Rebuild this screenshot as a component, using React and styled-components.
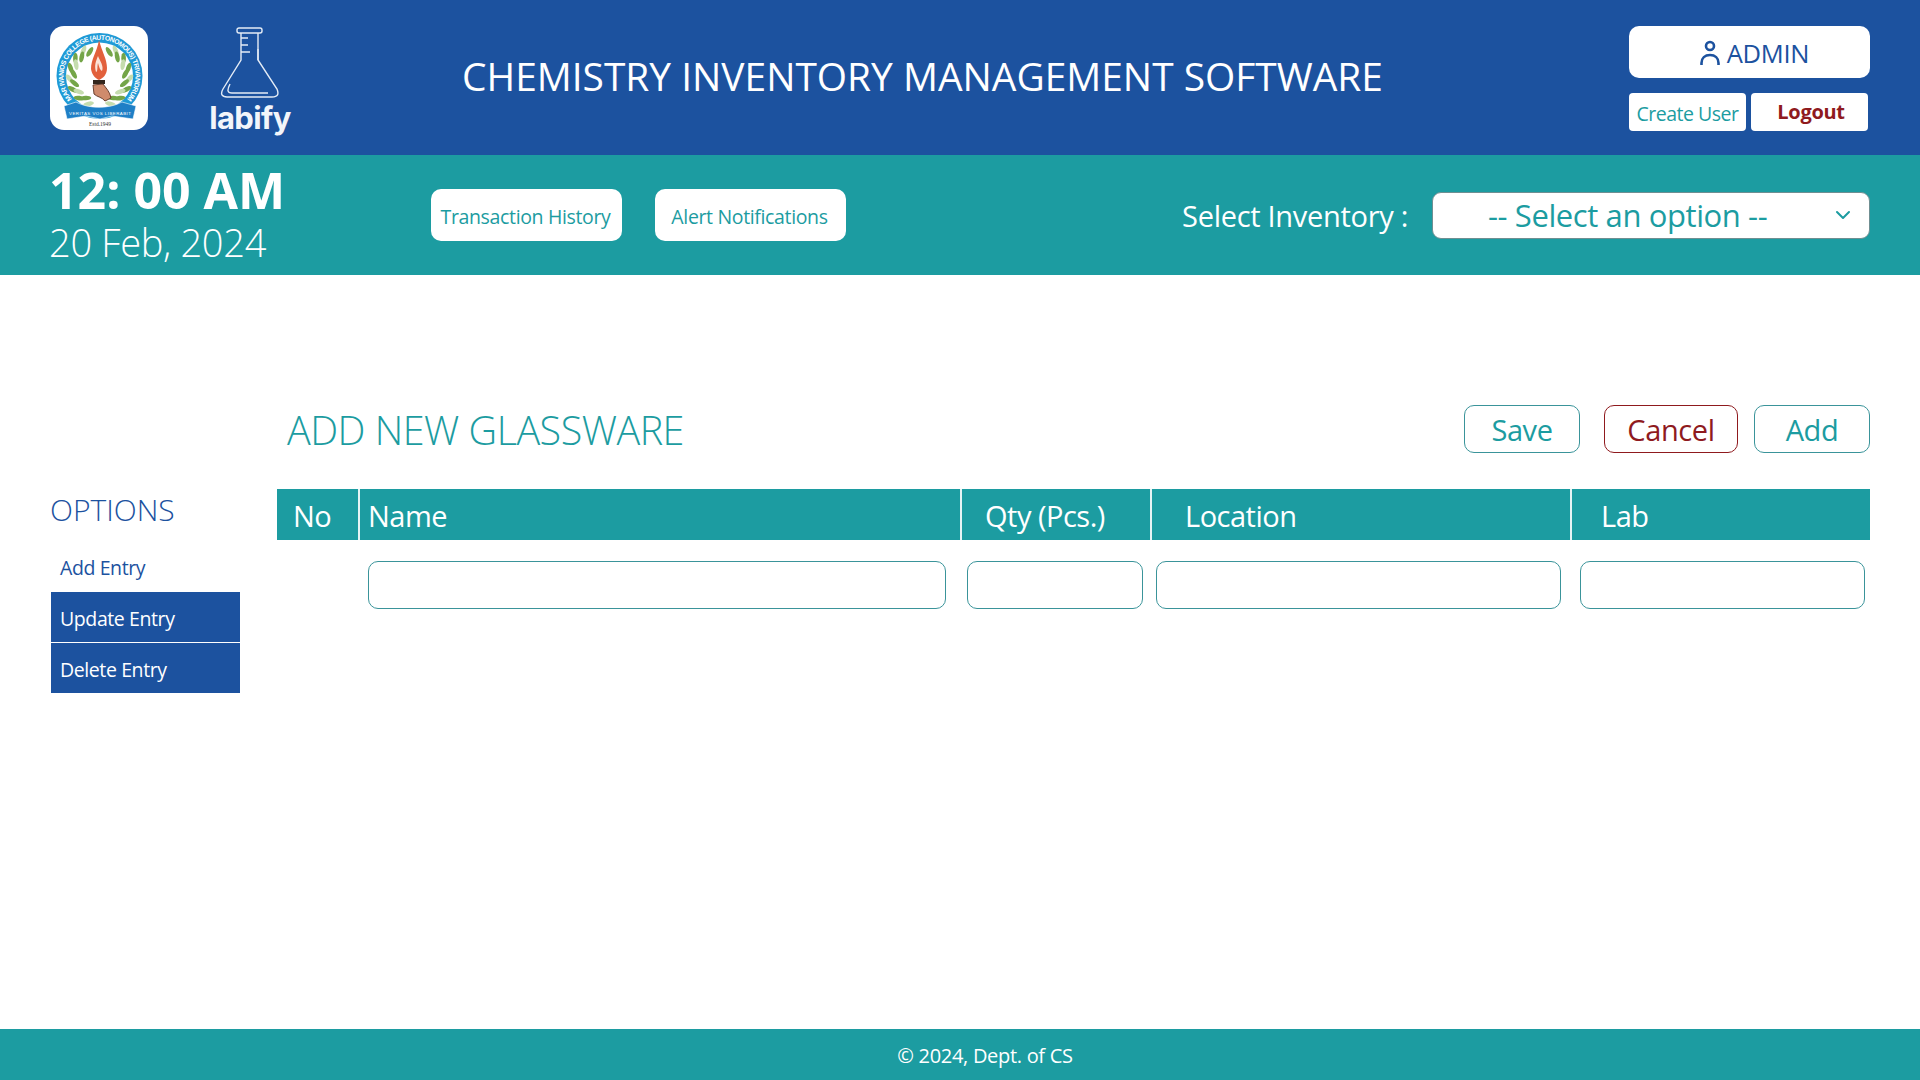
import React from 'react';
import styled, { createGlobalStyle } from 'styled-components';
import { ChevronDown } from 'lucide-react';

const BLUE = '#1c529f';
const TEAL = '#1c9ca1';
const LINE = '#3a949a';
const RED = '#8f1a1e';

const GlobalStyle = createGlobalStyle`
  html, body { margin: 0; padding: 0; background: #fff; }
  * { box-sizing: border-box; }
  body { font-family: "Open Sans", "Noto Sans", sans-serif; overflow: hidden; }
`;

const Page = styled.div`
  height: 1080px;
  display: flex;
  flex-direction: column;
`;

const Header = styled.header`
  height: 155px;
  background: ${BLUE};
  display: flex;
  align-items: flex-start;
  padding: 26px 50px 0;
`;

const LogoCard = styled.div`
  width: 98px;
  height: 104px;
  background: #fff;
  border-radius: 14px;
  display: flex;
`;

const LabifyMark = styled.div`
  width: 90px;
  margin-left: 57px;
  margin-top: 1px;
  display: flex;
  flex-direction: column;
  align-items: center;
`;

const LabifyText = styled.span`
  font-family: Inter, sans-serif;
  font-weight: 700;
  font-size: 31px;
  line-height: 30px;
  margin-top: 4px;
  letter-spacing: -0.6px;
  color: #f2f5fa;
`;

const Title = styled.h1`
  margin: 28px 0 0 167px;
  flex: 1;
  font-weight: 400;
  font-size: 38.9px;
  line-height: 44px;
  color: #fff;
  white-space: nowrap;
`;

const UserPanel = styled.div`
  width: 241px;
  display: flex;
  flex-direction: column;
  gap: 15px;
`;

const AdminBadge = styled.div`
  height: 52px;
  padding: 2px 0 0 10px;
  background: #fff;
  border-radius: 10px;
  display: flex;
  align-items: center;
  justify-content: center;
  gap: 7px;
  color: ${BLUE};
  font-size: 25.5px;
  font-weight: 400;
  letter-spacing: -0.3px;
`;

const UserActions = styled.div`
  display: flex;
  gap: 5px;
`;

const SmallAction = styled.button`
  width: 117px;
  height: 38px;
  padding: ${p => (p.$danger ? '0 0 2px 3px' : '3px 0 0')};
  border: 0;
  background: #fff;
  border-radius: 4px;
  font-family: inherit;
  font-size: ${p => (p.$danger ? '20px' : '19.5px')};
  font-weight: ${p => (p.$danger ? 700 : 400)};
  letter-spacing: ${p => (p.$danger ? '-0.3px' : '-0.5px')};
  color: ${p => (p.$danger ? RED : TEAL)};
`;

const SubBar = styled.div`
  height: 120px;
  background: ${TEAL};
  display: flex;
  align-items: center;
  padding: 0 50px 0 49px;
`;

const Clock = styled.div`
  width: 382px;
  margin-bottom: 3px;
  color: #fff;
  display: flex;
  flex-direction: column;
`;

const Time = styled.div`
  font-weight: 700;
  font-size: 50px;
  line-height: 56px;
`;

const DateText = styled.div`
  font-weight: 300;
  font-size: 38px;
  line-height: 48px;
  letter-spacing: -0.3px;
`;

const BarLinks = styled.div`
  display: flex;
  gap: 33px;
  flex: 1;
`;

const BarLink = styled.button`
  width: 191px;
  height: 52px;
  padding: 3px 2px 0 0;
  border: 0;
  border-radius: 10px;
  background: #fff;
  color: ${TEAL};
  font-family: inherit;
  font-size: 19.5px;
  letter-spacing: -0.35px;
`;

const InventoryLabel = styled.span`
  color: #fff;
  font-size: 29px;
  letter-spacing: -0.3px;
  margin-right: 24px;
`;

const InventorySelect = styled.div`
  position: relative;
  width: 438px;
  height: 47px;
  background: #fff;
  border: 1px solid #6f8f92;
  border-radius: 9px;
  color: ${TEAL};
  font-size: 31px;
  letter-spacing: -0.4px;
  display: flex;
  align-items: center;
  padding-left: 55px;
`;

const Caret = styled(ChevronDown)`
  position: absolute;
  right: 14px;
  top: 10px;
`;

const Main = styled.main`
  flex: 1;
  display: flex;
  padding: 130px 50px 0;
`;

const Sidebar = styled.aside`
  width: 227px;
  padding-top: 86px;
  display: flex;
  flex-direction: column;
`;

const SideTitle = styled.h2`
  margin: 0 0 12px;
  font-weight: 300;
  font-size: 30px;
  line-height: 38px;
  color: ${BLUE};
`;

const SideItem = styled.div`
  width: 189px;
  height: 50px;
  margin-left: 1px;
  margin-bottom: 1px;
  padding: 2px 0 0 9px;
  display: flex;
  align-items: center;
  font-size: 19.5px;
  letter-spacing: -0.4px;
  background: ${p => (p.$active ? 'transparent' : BLUE)};
  color: ${p => (p.$active ? BLUE : '#fff')};
`;

const Content = styled.section`
  flex: 1;
  display: flex;
  flex-direction: column;
`;

const ContentHead = styled.div`
  height: 48px;
  display: flex;
  align-items: center;
  padding-left: 10px;
  margin-bottom: 36px;
`;

const FormTitle = styled.h2`
  margin: 0;
  padding-top: 2px;
  flex: 1;
  font-weight: 300;
  font-size: 39.5px;
  letter-spacing: -0.5px;
  color: ${TEAL};
`;

const OutlineButton = styled.button`
  width: ${p => p.$w}px;
  height: 48px;
  margin-left: ${p => p.$gap || 0}px;
  padding: 0;
  background: #fff;
  border: 1px solid ${p => (p.$danger ? RED : LINE)};
  border-radius: 10px;
  font-family: inherit;
  font-size: 29px;
  letter-spacing: -0.4px;
  color: ${p => (p.$danger ? RED : TEAL)};
`;

const TableHead = styled.div`
  display: grid;
  grid-template-columns: 81px 602px 190px 420px 300px;
  height: 51px;
  background: ${TEAL};
`;

const HeadCell = styled.div`
  display: flex;
  align-items: center;
  padding: 2px 0 0 ${p => p.$pad}px;
  border-left: ${p => (p.$first ? '0' : '2px solid #e6f4f4')};
  color: #fff;
  font-size: 29px;
  letter-spacing: -0.5px;
`;

const InputRow = styled.div`
  display: flex;
  margin-top: 21px;
  padding-left: 91px;
`;

const FieldInput = styled.input`
  width: ${p => p.$w}px;
  height: 48px;
  margin-left: ${p => p.$gap || 0}px;
  border: 1px solid ${LINE};
  border-radius: 10px;
  background: #fff;
  outline: none;
`;

const Footer = styled.footer`
  height: 51px;
  background: ${TEAL};
  color: #fff;
  font-size: 20px;
  letter-spacing: -0.3px;
  display: flex;
  align-items: center;
  justify-content: center;
  padding: 2px 0 0 50px;
`;

function CollegeLogo() {
  const leaves = [];
  for (let i = 0; i < 28; i++) {
    const side = i % 2 === 0 ? 1 : -1;
    const step = Math.floor(i / 2);
    const deg = side * (22 + step * 10.5);
    const a = (deg * Math.PI) / 180;
    const r = step % 2 === 0 ? 26 : 30;
    const x = 49.5 + Math.sin(a) * r;
    const y = 50 - Math.cos(a) * r;
    leaves.push(
      <ellipse key={i} cx={x} cy={y} rx="5.5" ry="2.3"
        fill={step % 3 === 1 ? '#c5dcae' : '#74a548'}
        transform={`rotate(${deg + side * 35} ${x} ${y})`} />
    );
  }
  return (
    <svg width="98" height="104" viewBox="0 0 98 104">
      <defs>
        <path id="ringText" d="M 21.9 73 A 36 36 0 1 1 77.1 73" />
      </defs>
      <circle cx="49.5" cy="50" r="43" fill="#1f9ad6" />
      <circle cx="49.5" cy="50" r="33.5" fill="#fff" />
      <text fontFamily="'Liberation Sans', sans-serif" fontSize="6.8" fontWeight="700" fill="#fff">
        <textPath href="#ringText" textLength="163">MAR IVANIOS COLLEGE (AUTONOMOUS) TRIVANDRUM</textPath>
      </text>
      {leaves}
      <path d="M49 14 C47 26 41 33 41 43 C42 49 45 52 49 54 C53 52 57 49 57 42 C57 33 52 26 49 14 Z" fill="#e2603c" />
      <path d="M48 30 C46 35 44 39 46 46 C48 46 47 40 48 37 C49 41 50 44 52 45 C54 40 50 35 48 30 Z" fill="#fbe3d8" />
      <rect x="43" y="54" width="12" height="4" fill="#33261d" />
      <path d="M43 59 L53 58 C56 62 60 66 61 72 L55 75 C52 71 47 71 44 68 Z" fill="#cf8b6c" stroke="#5c3324" strokeWidth="0.9" />
      <path d="M14 80 L26 76 C38 83 60 83 72 76 L86 80 L83 93 L62 90 L50 93 L36 90 L17 93 Z" fill="#1f7fc6" stroke="#fff" strokeWidth="0.6" />
      <text x="50" y="89" textAnchor="middle" fontFamily="'Liberation Sans', sans-serif" fontSize="4.4" fill="#fff" textLength="62">VERITAS VOS LIBERABIT</text>
      <text x="50" y="100" textAnchor="middle" fontFamily="'Liberation Serif', serif" fontSize="5.5" fill="#333">Estd.1949</text>
    </svg>
  );
}

function FlaskIcon() {
  return (
    <svg width="62" height="72" viewBox="0 0 62 72" fill="none" stroke="#e4ecf6" strokeWidth="1.4">
      <rect x="18" y="1" width="25" height="5" rx="2" />
      <path d="M22 6 V33 L4 62 C1 67 3 70 8 70 H53 C59 70 60 67 58 62 L39 33 V6" />
      <path d="M22 11 H29 M22 18 H29 M22 25 H31" />
      <path d="M39 22 V33" />
      <path d="M11 57 C8 63 8 66 13 66 H49" />
    </svg>
  );
}

function UserIcon() {
  return (
    <svg width="20" height="26" viewBox="0 0 20 26" fill="none" stroke={BLUE} strokeWidth="2.6">
      <circle cx="10" cy="6" r="4" />
      <path d="M1.5 25 V23 C1.5 18 5 15 10 15 C15 15 18.5 18 18.5 23 V25" />
    </svg>
  );
}

export default function App() {
  return (
    <Page>
      <GlobalStyle />
      <Header>
        <LogoCard><CollegeLogo /></LogoCard>
        <LabifyMark>
          <FlaskIcon />
          <LabifyText>labify</LabifyText>
        </LabifyMark>
        <Title>CHEMISTRY INVENTORY MANAGEMENT SOFTWARE</Title>
        <UserPanel>
          <AdminBadge><UserIcon />ADMIN</AdminBadge>
          <UserActions>
            <SmallAction>Create User</SmallAction>
            <SmallAction $danger>Logout</SmallAction>
          </UserActions>
        </UserPanel>
      </Header>

      <SubBar>
        <Clock>
          <Time>12: 00 AM</Time>
          <DateText>20 Feb, 2024</DateText>
        </Clock>
        <BarLinks>
          <BarLink>Transaction History</BarLink>
          <BarLink>Alert Notifications</BarLink>
        </BarLinks>
        <InventoryLabel>Select Inventory :</InventoryLabel>
        <InventorySelect>
          -- Select an option --
          <Caret size={24} color={TEAL} strokeWidth={2} />
        </InventorySelect>
      </SubBar>

      <Main>
        <Sidebar>
          <SideTitle>OPTIONS</SideTitle>
          <SideItem $active>Add Entry</SideItem>
          <SideItem>Update Entry</SideItem>
          <SideItem>Delete Entry</SideItem>
        </Sidebar>
        <Content>
          <ContentHead>
            <FormTitle>ADD NEW GLASSWARE</FormTitle>
            <OutlineButton $w={116}>Save</OutlineButton>
            <OutlineButton $w={134} $gap={24} $danger>Cancel</OutlineButton>
            <OutlineButton $w={116} $gap={16}>Add</OutlineButton>
          </ContentHead>
          <TableHead>
            <HeadCell $first $pad={16}>No</HeadCell>
            <HeadCell $pad={8}>Name</HeadCell>
            <HeadCell $pad={23}>Qty (Pcs.)</HeadCell>
            <HeadCell $pad={33}>Location</HeadCell>
            <HeadCell $pad={29}>Lab</HeadCell>
          </TableHead>
          <InputRow>
            <FieldInput $w={578} />
            <FieldInput $w={176} $gap={21} />
            <FieldInput $w={405} $gap={13} />
            <FieldInput $w={285} $gap={19} />
          </InputRow>
        </Content>
      </Main>

      <Footer>© 2024, Dept. of CS</Footer>
    </Page>
  );
}
